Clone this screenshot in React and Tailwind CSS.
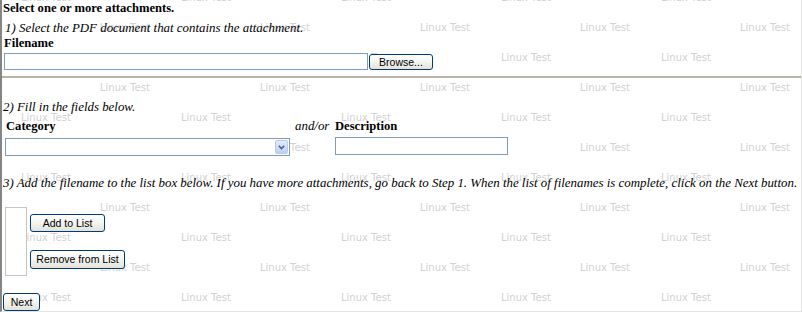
import React from "react";

const rows = Array.from({ length: 11 }, (_, i) => i);
const cols = Array.from({ length: 6 }, (_, i) => i);

const XpButton = ({ className = "", children }) => (
  <button
    type="button"
    className={`flex items-center justify-center rounded-[3px] border border-[#003c74] bg-linear-to-b from-white via-[#f4f4f0] to-[#e3e2da] font-['Liberation_Sans',Arial,sans-serif] text-[10.5px] leading-none text-black ${className}`}
  >
    {children}
  </button>
);

const Watermark = () => (
  <div className="pointer-events-none absolute inset-0 overflow-hidden select-none whitespace-nowrap font-['DejaVu_Sans',sans-serif] text-[10px] leading-[30px] text-[#d2d2d2]">
    <div className="-mt-[17px]">
      {rows.map((r) => (
        <div
          key={r}
          className={`flex h-[30px] ${r % 2 ? "pl-[98px]" : "pl-[19px]"}`}
        >
          {cols.map((c) => (
            <span key={c} className="w-[160px] shrink-0">
              Linux Test
            </span>
          ))}
        </div>
      ))}
    </div>
  </div>
);

export default function App() {
  return (
    <div className="relative h-[312px] w-[802px] overflow-hidden border-b border-l-2 border-r border-b-[#e4e4e4] border-l-[#858585] border-r-[#e4e4e4] bg-white font-['Liberation_Serif','Times_New_Roman',serif] text-[12.6px] leading-[15px] text-black">
      <Watermark />

      <div className="relative pl-px">
        {/* Step 1 */}
        <div className="pt-px font-bold">Select one or more attachments.</div>
        <div className="mt-[5px] pl-[2px] text-[12.9px] italic">
          1) Select the PDF document that contains the attachment.
        </div>
        <div className="pl-px font-bold">Filename</div>
        <div className="mt-[2px] flex items-start">
          <input
            type="text"
            className="ml-px h-[17px] w-[364px] border border-[#7f9db9] bg-white"
          />
          <XpButton className="ml-px mt-px h-[16px] w-[64px]">Browse...</XpButton>
        </div>

        <div className="-ml-px mt-[6px] h-[2px] bg-[#b9b5a6]" />

        {/* Step 2 */}
        <div className="mt-[22px] text-[12.9px] italic">2) Fill in the fields below.</div>
        <div className="mt-[4px] grid grid-cols-[292px_40px_1fr]">
          <div className="pl-[3px] font-bold">Category</div>
          <div className="text-[12.9px] italic">and/or</div>
          <div className="font-bold">Description</div>

          <div className="mt-[4px] pl-[2px]">
            <div className="flex h-[18px] w-[285px] items-center justify-end border border-[#7f9db9] bg-white pr-px">
              <div className="flex h-[14px] w-[13px] items-center justify-center rounded-[2px] border border-[#b9cbe8] bg-linear-to-b from-[#e2ebfb] to-[#bcd0f4]">
                <svg width="7" height="5" viewBox="0 0 7 5">
                  <path
                    d="M0.8 0.8 L3.5 3.6 L6.2 0.8"
                    fill="none"
                    stroke="#4d6185"
                    strokeWidth="1.6"
                  />
                </svg>
              </div>
            </div>
          </div>
          <div />
          <div className="mt-[3px]">
            <input
              type="text"
              className="h-[18px] w-[173px] border border-[#7f9db9] bg-white"
            />
          </div>
        </div>

        {/* Step 3 */}
        <div className="mt-[20px] whitespace-nowrap text-[12.9px] italic">
          3) Add the filename to the list box below. If you have more
          attachments, go back to Step 1. When the list of filenames is
          complete, click on the Next button.
        </div>
        <div className="mt-[16px] flex items-start">
          <div className="ml-[2px] h-[69px] w-[22px] border border-[#c9c5b8] bg-white" />
          <div className="ml-[3px] mt-[7px] flex flex-col gap-[18px]">
            <XpButton className="h-[18px] w-[75px]">Add to List</XpButton>
            <XpButton className="h-[19px] w-[95px]">Remove from List</XpButton>
          </div>
        </div>
        <XpButton className="mt-[17px] h-[18px] w-[37px]">Next</XpButton>
      </div>
    </div>
  );
}
